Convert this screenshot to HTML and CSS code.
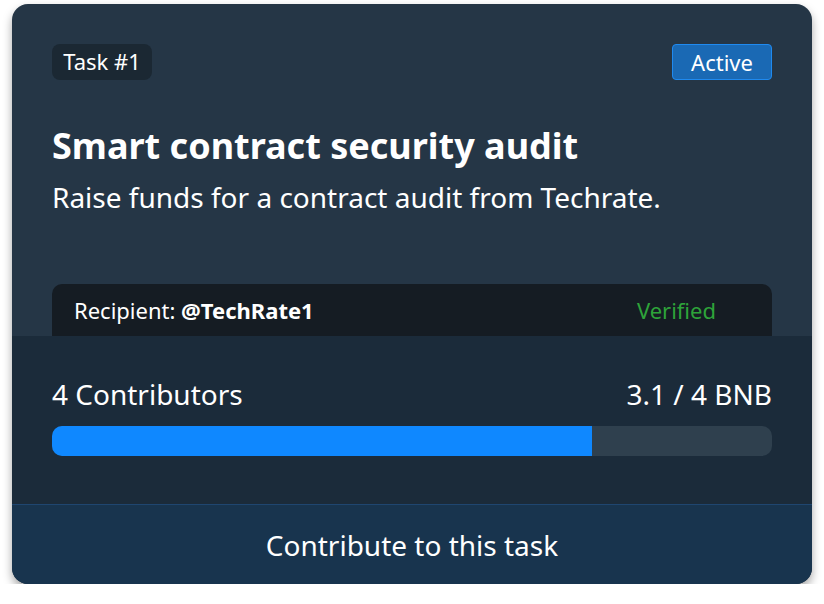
FILE: index.html
```html
<!DOCTYPE html>
<html>
<head>
<meta charset="utf-8">
<link rel="stylesheet" href="styles.css">
</head>
<body>
<div class="card">
  <div class="top">
    <div class="header">
      <span class="task">Task #1</span>
      <span class="status">Active</span>
    </div>
    <h1 class="title">Smart contract security audit</h1>
    <p class="desc">Raise funds for a contract audit from Techrate.</p>
    <div class="recipient">
      <span>Recipient: <b>@TechRate1</b></span>
      <span class="verified">Verified</span>
    </div>
  </div>
  <div class="progress">
    <div class="stats">
      <span>4 Contributors</span>
      <span>3.1 / 4 BNB</span>
    </div>
    <div class="bar"><div class="fill" style="width:75%"></div></div>
  </div>
  <button class="cta">Contribute to this task</button>
</div>
</body>
</html>
```
FILE: styles.css
```css
* { box-sizing: border-box; }
body {
  margin: 0;
  background: #ffffff;
  font-family: "Noto Sans", "Open Sans", sans-serif;
  color: #ffffff;
}
.card {
  margin: 4px 0 0 12px;
  width: 800px;
  height: 580px;
  border-radius: 16px;
  overflow: hidden;
  background: #253646;
  box-shadow: 0 5px 10px rgba(0,0,0,0.35);
  display: flex;
  flex-direction: column;
}
.top {
  padding: 40px 40px 0;
  flex: none;
}
.header {
  display: flex;
  justify-content: space-between;
  align-items: center;
  height: 36px;
}
.task {
  height: 36px;
  line-height: 35px;
  width: 100px;
  text-align: center;
  border-radius: 8px;
  background: #1b2833;
  font-size: 22px;
}
.status {
  height: 36px;
  line-height: 34px;
  width: 100px;
  text-align: center;
  border-radius: 4px;
  background: #1a69b4;
  border: 1px solid #1f8af0;
  font-size: 22px;
}
.title {
  margin: 44px 0 0;
  font-size: 36px;
  line-height: 44px;
  font-weight: 700;
}
.desc {
  margin: 10px 0 0;
  font-size: 28px;
  line-height: 38px;
}
.recipient {
  margin-top: 68px;
  height: 52px;
  background: #151c23;
  border-radius: 10px 10px 0 0;
  display: flex;
  justify-content: space-between;
  align-items: center;
  padding: 0 56px 0 22px;
  font-size: 22px;
}
.verified { color: #2ea33a; }
.progress {
  flex: none;
  background: #1b2b3a;
  padding: 39px 40px 48px;
  height: 168px;
}
.stats {
  display: flex;
  justify-content: space-between;
  font-size: 28px;
  line-height: 38px;
}
.bar {
  margin-top: 13px;
  height: 30px;
  border-radius: 10px;
  background: #2f404e;
  overflow: hidden;
}
.fill {
  height: 100%;
  background: #0f88ff;
}
.cta {
  flex: 1;
  border: none;
  border-top: 1px solid #1f4670;
  background: #18344e;
  color: #ffffff;
  font-family: inherit;
  font-size: 28px;
  padding: 0;
}
```
